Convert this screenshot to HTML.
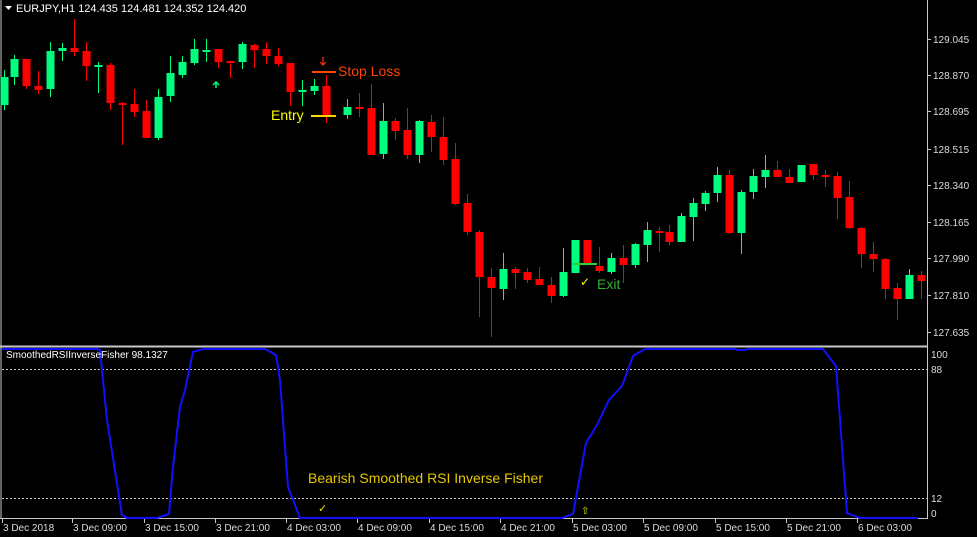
<!DOCTYPE html>
<html><head><meta charset="utf-8"><style>
html,body{margin:0;padding:0;background:#000;width:977px;height:537px;overflow:hidden}
svg{display:block}
text{font-family:"Liberation Sans",sans-serif}
</style></head><body>
<svg id="s" width="977" height="537" viewBox="0 0 977 537" xmlns="http://www.w3.org/2000/svg">
<rect width="977" height="537" fill="#000"/>
<line x1="1" y1="0" x2="1" y2="519" stroke="#c8c8c8" stroke-width="1"/>
<line x1="927.5" y1="0" x2="927.5" y2="519" stroke="#c8c8c8" stroke-width="1"/>
<line x1="0" y1="346.5" x2="928" y2="346.5" stroke="#c8c8c8" stroke-width="2"/>
<line x1="0" y1="518.5" x2="928" y2="518.5" stroke="#c8c8c8" stroke-width="1"/>
<g id="c"></g>
<g font-size="11" fill="#fff">
<polygon points="5,6 12,6 8.5,10" fill="#fff"/>
<text x="16" y="12">EURJPY,H1  124.435 124.481 124.352 124.420</text>
</g>
<g id="ax" font-size="10" fill="#dcdcdc"></g>
<!-- annotations -->
<line x1="312" y1="72" x2="336" y2="72" stroke="#ff4500" stroke-width="2"/>
<text x="338" y="76" font-size="14" fill="#ff4500">Stop Loss</text>
<path d="M323 57v8M320 62l3 3 3-3" stroke="#ff3010" stroke-width="1.2" fill="none"/>
<line x1="311" y1="116" x2="336" y2="116" stroke="#ffd700" stroke-width="2"/>
<text x="271" y="120" font-size="14" fill="#ffff00">Entry</text>
<path d="M216 88v-6M213 85l3-3 3 3" stroke="#00ff7f" stroke-width="1.5" fill="none"/>
<line x1="573" y1="264" x2="597" y2="264" stroke="#32cd32" stroke-width="2"/>
<text x="580" y="286" font-size="12" fill="#ffff00">✓</text>
<text x="597" y="289" font-size="14" fill="#32b032">Exit</text>
<!-- indicator -->
<line x1="2" y1="369.5" x2="927" y2="369.5" stroke="#c8c8c8" stroke-dasharray="2,2" stroke-width="1"/>
<line x1="2" y1="498.5" x2="927" y2="498.5" stroke="#c8c8c8" stroke-dasharray="2,2" stroke-width="1"/>
<polyline fill="none" stroke="#1010ff" stroke-width="2" points="2,349 97,349 100,350 107,420 122,515 127,518 157,518 169,514 173,467 180,407 185,390 193,352 203,349 265,349 276,355 280,380 288,487 300,518 562,518 573,514 586,443 597,425 609,400 622,386 633,356 645,349 735,349 737,350 745,350 747,349 823,349 836,366 847,513 860,518 918,518"/>
<text x="6" y="358" font-size="10" fill="#fff">SmoothedRSIInverseFisher 98.1327</text>
<text x="308" y="483" font-size="14" fill="#e6c800">Bearish Smoothed RSI Inverse Fisher</text>
<text x="318" y="512" font-size="11" fill="#e6e600">✓</text>
<text x="581" y="514" font-size="10" fill="#e6e600">⇧</text>
<g font-size="10" fill="#dcdcdc">
<text x="931" y="358">100</text><text x="931" y="373">88</text>
<text x="931" y="502">12</text><text x="931" y="517">0</text>
</g>
<g id="tm" font-size="10" fill="#dcdcdc"></g>
</svg>
<script>
var N="http://www.w3.org/2000/svg",g=document.getElementById('c');
function el(t,a,p){var e=document.createElementNS(N,t);for(var k in a)e.setAttribute(k,a[k]);(p||g).appendChild(e);return e;}
// x, open, close, high, low (pixel y); color decided by open>close (up if close<open in px)
var d=[
[4,105,77,70,110],[14,77,59,55,85],[26,59,86,59,89],[38,86,90,71,94],[50,89,51,42,97],[62,51,48,43,61],[74,48,52,19,56],[86,51,66,42,81],[98,66,65,62,93],[110,65,103,63,110],[122,103,105,102,145],[134,104,112,89,117],[146,111,138,100,138],[158,138,97,89,140],[170,96,73,56,102],[182,75,62,56,78],[194,63,49,39,65],[206,51,50,39,62],[218,49,62,49,68],[230,61,62,61,78],[242,62,44,42,69],[254,45,50,44,68],[266,49,56,42,64],[278,56,64,48,66],[290,63,92,63,106],[302,92,90,80,106],[314,91,86,79,95],[326,86,116,75,123],
[347,115,107,99,119],[359,107,109,93,117],[371,108,155,84,155],[383,154,121,103,159],[395,121,131,118,140],[407,130,155,108,159],[419,155,121,120,163],[431,122,137,115,152],[443,137,160,117,165],[455,159,204,143,205],[467,203,232,194,235],[479,232,277,230,317],[491,277,288,268,337],[503,289,269,253,300],[515,269,273,267,289],[527,272,280,268,283],[539,279,285,267,285],[551,285,296,277,303],[563,296,272,248,297],[575,273,240,240,273],[587,240,264,240,264],[599,266,271,247,273],[611,272,258,253,274],[623,258,265,245,283],[635,265,244,243,268],[647,245,230,222,262],[659,231,232,227,252],
[669,232,242,225,245],[681,242,216,213,242],[693,217,203,198,241],[705,204,193,191,211],[717,193,175,167,202],[729,175,233,170,234],[741,233,192,190,254],[753,192,176,169,199],[765,177,170,155,188],[777,170,177,161,177],[789,177,183,169,183],[801,182,165,165,182],[813,164,175,164,180],[825,175,176,170,187],[837,176,198,172,219],[849,197,228,181,229],[861,228,254,227,268],[873,254,259,242,272],[885,259,289,258,299],[897,288,299,283,320],[909,299,275,269,299],[921,275,281,271,299]];
d.forEach(function(c){var up=c[2]<c[1],col=up?'#00ff7f':'#ff0000';
el('line',{x1:c[0]+.5,x2:c[0]+.5,y1:c[3],y2:c[4],stroke:col,'stroke-width':1});
var t=Math.min(c[1],c[2]),h=Math.max(2,Math.abs(c[1]-c[2]));
el('rect',{x:c[0]-3.5,y:t,width:8,height:h,fill:col});});
var ax=document.getElementById('ax');
[[129.045,39],[128.870,75],[128.695,111],[128.515,149],[128.340,185],[128.165,222],[127.990,258],[127.810,295],[127.635,332]].forEach(function(a){
el('line',{x1:927,x2:931,y1:a[1]+.5,y2:a[1]+.5,stroke:'#c8c8c8'},ax);
var t=el('text',{x:933,y:a[1]+4},ax);t.textContent=a[0].toFixed(3);});
var tm=document.getElementById('tm');
[["3 Dec 2018",3],["3 Dec 09:00",73],["3 Dec 15:00",145],["3 Dec 21:00",216],["4 Dec 03:00",287],["4 Dec 09:00",358],["4 Dec 15:00",430],["4 Dec 21:00",501],["5 Dec 03:00",573],["5 Dec 09:00",644],["5 Dec 15:00",716],["5 Dec 21:00",787],["6 Dec 03:00",858]].forEach(function(a){
el('line',{x1:a[1]-0.5,x2:a[1]-0.5,y1:519,y2:523,stroke:'#c8c8c8'},tm);
var t=el('text',{x:a[1],y:531},tm);t.textContent=a[0];});
</script>
</body></html>
